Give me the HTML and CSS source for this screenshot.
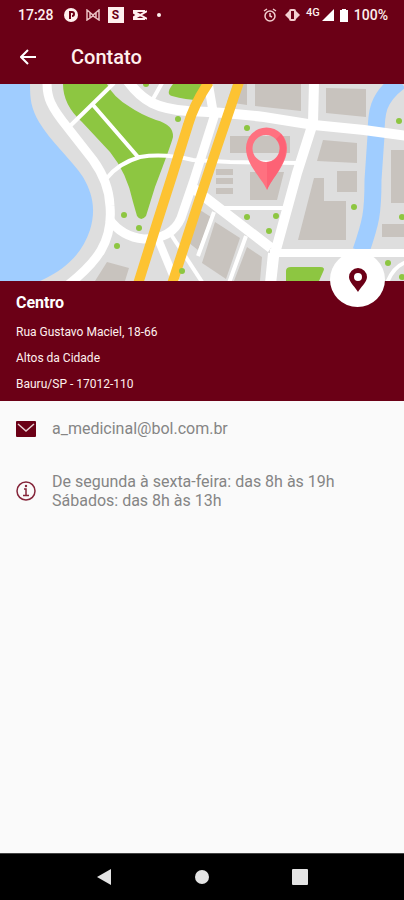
FILE: index.html
```
<!DOCTYPE html>
<html lang="pt-BR">

<head>
	<meta charset="UTF-8">
	<meta name="viewport" content="width=device-width, initial-scale=1.0">
	<title>Contato</title>
	<link rel="stylesheet" href="styles.css">
</head>

<body>
	<div class="status-bar">
		<span class="clock">17:28</span>
		<svg width="14" height="14" viewBox="0 0 14 14">
			<circle cx="7" cy="7" r="7" fill="#fff0ee"/>
			<path d="M6 11V4h2a2 2 0 0 1 0 4" fill="none" stroke="#6b0016" stroke-width="2"/>
		</svg>
		<svg width="14" height="12" viewBox="0 0 14 12" fill="none" stroke="#e9bfc2" stroke-width="1.500">
			<path d="M1 11V1l6 5 6-5v10L7 7zM4 4v5M10 4v5"/>
		</svg>
		<span class="badge">S</span>
		<svg width="15" height="12" viewBox="0 0 15 12" fill="none" stroke="#fff0ee" stroke-width="2">
			<path d="M15 2 3 9M15 10 3 3M12 3V2H2v2l3 2-3 2v2h10V9"/>
		</svg>
		<span class="dot"></span>
		<div class="status-right">
			<svg width="14" height="14" viewBox="0 0 14 14" fill="none" stroke="#f3cfd0" stroke-width="1.500">
				<circle cx="7" cy="8" r="5"/>
				<path d="M1 3l3-2M13 3l-3-2M7 5v3l2 1"/>
			</svg>
			<svg class="vibrate" width="15" height="12" viewBox="0 0 15 12" fill="#f3cfd0">
				<path d="M0 6l4-4v8zM15 6l-4-4v8z"/>
				<rect x="5" y="1" width="5" height="10" rx="1" fill="none" stroke="#f3cfd0" stroke-width="2"/>
			</svg>
			<span class="network">4G</span>
			<svg width="12" height="12" viewBox="0 0 12 12" fill="#fff"><path d="M12 0v12H0z"/></svg>
			<svg class="battery" width="8" height="13" viewBox="0 0 8 13" fill="#fff"><path d="M2 0h4v1h2v12H0V1h2z"/></svg>
			<span>100%</span>
		</div>
	</div>

	<header class="app-bar">
		<button class="back" aria-label="Voltar">
			<svg width="16" height="16" viewBox="0 0 16 16" fill="none" stroke="#fff" stroke-width="2">
				<path d="M16 8H2M8 1 1 8l7 7"/>
			</svg>
		</button>
		<h1>Contato</h1>
	</header>

	<main>
		<svg class="map" viewBox="0 0 404 197">
			<rect width="404" height="197" fill="#dedede"/>

			<!-- water -->
			<path d="M0 0H30C30 15 31 24 39 38C50 57 72 76 83 93C93 110 96 126 90 146C82 170 66 185 40 197H0z" fill="#a0cdff"/>
			<path d="M400-3C377 14 376 29 376 52L373 96C373 129 371 138 361 167" fill="none" stroke="#a0cdff" stroke-width="17"/>

			<!-- parks -->
			<g fill="#8dc641">
				<path d="M63 0H107Q113 13 130 23Q140 30 156 36Q174 41 173 53Q171 61 155 103L146 132Q141 138 137 132L133 118Q127 89 110 68L82 38Q63 21 63 0z"/>
				<path d="M173 0H203L199 16Q186 16 172 12Q165 10 173 0z"/>
				<path d="M286 197V187Q286 183 291 183H320Q326 183 323 188L319 197z"/>
			</g>

			<!-- buildings -->
			<g fill="#c8c3be">
				<path d="M233 0H247V21L227 18zM255 0H301V27L255 22zM326 4 366 5V33L326 29z"/>
				<path d="M230 52H290V69H230zM250 88H284L277 116H250zM216 85H233V91H216zM216 94H233V100H216zM216 104H233V110H216z"/>
				<path d="M323 56 357 59V79L317 77zM337 87H357V108H337zM314 94H324V117H346V156H298zM391 66H404V119H391zM382 140H404V153H382z"/>
				<path d="M215 138 240 154 226 195 202 179zM247 163 262 173 260 197H234zM200 126 211 133 198 166 189 159zM107 178 129 184 125 197H95z"/>
			</g>

			<!-- streets -->
			<g fill="none" stroke="#fff">
				<path d="M47-1C47 13 50 22 68 44L93 76Q109 98 110 122C113 158 97 178 68 201" stroke-width="9"/>
				<path d="M127-4C143 18 158 25 188 27Q222 28 264 33L314 41L364 46L408 52" stroke-width="10"/>
				<path d="M208-2L214 33L193 99L181 134Q172 155 144 155Q122 153 109 135" stroke-width="9"/>
				<path d="M314-2L313 39L297 89L274 173L271 200M193 104L271 164" stroke-width="10"/>
				<path d="M270 169H404" stroke-width="8"/>
				<path d="M158 155L177 201" stroke-width="8"/>
				<path d="M170 149L204 201" stroke-width="4"/>
				<path d="M68 44L114-1M93 21L138 73M107 94Q119 79 140 73Q164 69 193 76L230 78L298 79M213 124H284" stroke-width="4"/>
				<path d="M153 15L162-1M387 199Q393 183 406 178M246 152L229 199M214 128L198 172M270 169L267 199" stroke-width="4"/>
			</g>

			<!-- avenues -->
			<g fill="none" stroke="#fdc332" stroke-width="10">
				<path d="M209-2Q194 20 188 41L173 89L157 139L138 200"/>
				<path d="M239-2L217 63L197 123L172 200"/>
			</g>

			<g fill="#8dc641">
				<circle cx="124" cy="131" r="3"/>
				<circle cx="139" cy="144" r="3"/>
				<circle cx="117" cy="162" r="3"/>
				<circle cx="146" cy="0" r="3"/>
				<circle cx="178" cy="35" r="3"/>
				<circle cx="182" cy="187" r="3"/>
				<circle cx="247" cy="44" r="3"/>
				<circle cx="247" cy="133" r="3"/>
				<circle cx="276" cy="132" r="3"/>
				<circle cx="269" cy="147" r="3"/>
				<circle cx="354" cy="123" r="3"/>
				<circle cx="399" cy="37" r="3"/>
				<circle cx="402" cy="133" r="3"/>
				<circle cx="388" cy="179" r="3"/>
				<circle cx="402" cy="193" r="3"/>
			</g>

			<!-- pin -->
			<path d="M267 106C262 94 246 81 246 64A20.500 20.500 0 0 1 287 64C287 81 272 94 267 106zM266 51A13.500 13.500 0 1 0 266 78A13.500 13.500 0 1 0 266 51z" fill="#ff7180" fill-rule="evenodd"/>
			<path d="M267 78A13.500 13.500 0 0 0 276 55L281 50Q286 56 286 64C286 81 272 94 267 106z" fill="#fd6275"/>
		</svg>

		<section class="address">
			<button class="fab" aria-label="Abrir no mapa">
				<svg width="18" height="24" viewBox="0 0 18 24">
					<path d="M9 24C7 20 0 14 0 9A9 9 0 0 1 18 9C18 14 11 20 9 24zM9 5A4 4 0 1 0 9 13A4 4 0 1 0 9 5z" fill="#6b0016" fill-rule="evenodd"/>
				</svg>
			</button>
			<h2>Centro</h2>
			<p>Rua Gustavo Maciel, 18-66</p>
			<p>Altos da Cidade</p>
			<p>Bauru/SP - 17012-110</p>
		</section>

		<section class="contact">
			<div class="row">
				<svg width="20" height="16" viewBox="0 0 20 16">
					<rect width="20" height="16" rx="1" fill="#6b0016"/>
					<path d="M2 3l8 7 8-7" fill="none" stroke="#e9cfd2" stroke-width="1.500"/>
				</svg>
				<a href="mailto:a_medicinal@bol.com.br">a_medicinal@bol.com.br</a>
			</div>
			<div class="row">
				<svg width="20" height="20" viewBox="0 0 20 20" fill="none" stroke="#85253a">
					<circle cx="10" cy="10" r="9" stroke-width="1.500"/>
					<path d="M8 8h2v6M7 14.500h6" stroke-width="1.500"/>
					<circle cx="10" cy="5" r="1.200" fill="#85253a" stroke="none"/>
				</svg>
				<p>De segunda à sexta-feira: das 8h às 19h<br>Sábados: das 8h às 13h</p>
			</div>
		</section>
	</main>

	<nav class="nav-bar">
		<button aria-label="Voltar"><svg width="16" height="16" viewBox="0 0 16 16"><path d="M15 0v16L1 8z" fill="#e4e4e4"/></svg></button>
		<button aria-label="Início"><svg width="16" height="16" viewBox="0 0 16 16"><circle cx="8" cy="8" r="7" fill="#e4e4e4"/></svg></button>
		<button aria-label="Recentes"><svg width="16" height="16" viewBox="0 0 16 16"><rect width="16" height="16" rx="1" fill="#e4e4e4"/></svg></button>
	</nav>
</body>

</html>
```
FILE: styles.css
```
* {
	box-sizing: border-box;
}

body {
	margin: 0;
	min-height: 100vh;
	display: flex;
	flex-direction: column;
	background: #fafafa;
	color: #858585;
	font-family: Roboto, "Liberation Sans", sans-serif;
	font-size: 16px;
}

h1,
h2,
p {
	margin: 0;
}

svg {
	display: block;
	flex-shrink: 0;
}

button {
	display: flex;
	align-items: center;
	justify-content: center;
	padding: 0;
	border: 0;
	background: none;
}

.status-bar {
	display: flex;
	align-items: center;
	gap: 8px;
	height: 30px;
	padding: 0 16px 0 18px;
	background: #6b0016;
	color: #fff0ee;
	font-size: 14px;
	font-weight: 500;
}

.clock {
	margin-right: 2px;
}

.badge {
	width: 16px;
	background: #fff0ee;
	color: #6b0016;
	font-size: 12px;
	font-weight: bold;
	line-height: 16px;
	text-align: center;
}

.dot {
	width: 4px;
	height: 4px;
	margin-left: 2px;
	border-radius: 50%;
	background: #fff0ee;
}

.status-right {
	display: flex;
	align-items: center;
	gap: 6px;
	margin-left: auto;
}

.vibrate {
	margin-left: 2px;
}

.network {
	margin-right: -4px;
	padding-bottom: 6px;
	font-size: 11px;
}

.app-bar {
	display: flex;
	align-items: center;
	gap: 35px;
	height: 54px;
	padding: 0 20px;
	background: #6b0016;
	color: #fff0ee;
}

.app-bar h1 {
	font-size: 20px;
	font-weight: 500;
}

.map {
	width: 100%;
	height: auto;
}

.address {
	position: relative;
	padding: 10px 16px 4px;
	background: #6b0016;
	color: #fff0ee;
	font-size: 12px;
}

.address h2 {
	margin-bottom: 4px;
	color: #fff;
	font-size: 16px;
	line-height: 24px;
}

.address p {
	line-height: 26px;
}

.fab {
	position: absolute;
	top: -29px;
	right: 19px;
	width: 55px;
	height: 55px;
	border-radius: 50%;
	background: #fff;
}

.contact {
	display: flex;
	flex-direction: column;
	gap: 34px;
	padding: 18px 16px;
}

.row {
	display: flex;
	align-items: center;
	gap: 16px;
	line-height: 19px;
}

.row a {
	color: inherit;
	text-decoration: none;
}

.nav-bar {
	display: flex;
	justify-content: center;
	gap: 82px;
	height: 47px;
	margin-top: auto;
	border-top: 1px solid #444;
	background: #000;
}

.nav-bar button {
	width: 16px;
}
```
